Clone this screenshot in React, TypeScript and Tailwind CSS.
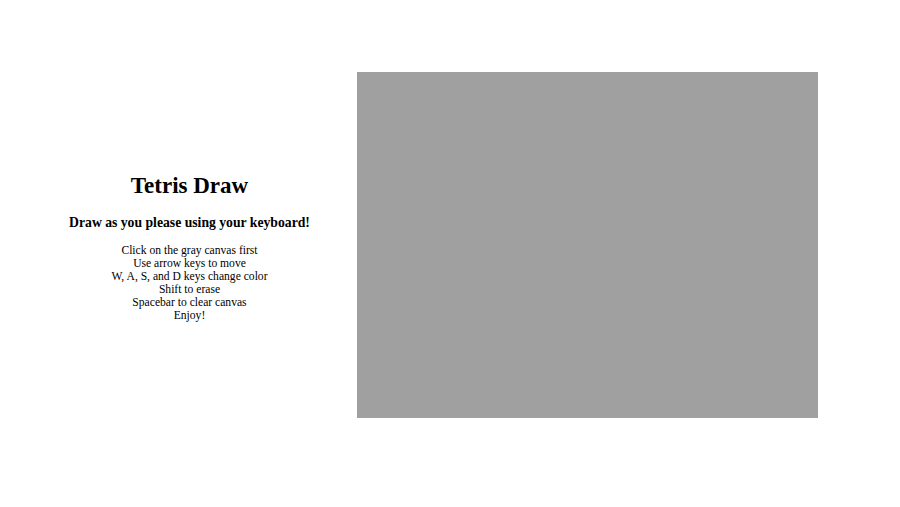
export default function App() {
  return (
    <div className="w-[900px] h-[507px] bg-white flex flex-row" style={{ fontFamily: '"Liberation Serif", serif' }}>
      <div className="w-[357px] h-[346px] mt-[72px] flex flex-col items-center justify-start pt-[100px] text-black text-center pl-[22px]">
        <h1 className="text-[23px] font-bold leading-[28px]">Tetris Draw</h1>
        <h3 className="text-[13.7px] font-bold leading-[18px] mt-[14px]">Draw as you please using your keyboard!</h3>
        <div className="text-[11.6px] leading-[13px] mt-[11.5px]">
          <div>Click on the gray canvas first</div>
          <div>Use arrow keys to move</div>
          <div>W, A, S, and D keys change color</div>
          <div>Shift to erase</div>
          <div>Spacebar to clear canvas</div>
          <div>Enjoy!</div>
        </div>
      </div>
      <div className="w-[461px] h-[346px] mt-[72px] bg-[#a0a0a0]" />
    </div>
  );
}
